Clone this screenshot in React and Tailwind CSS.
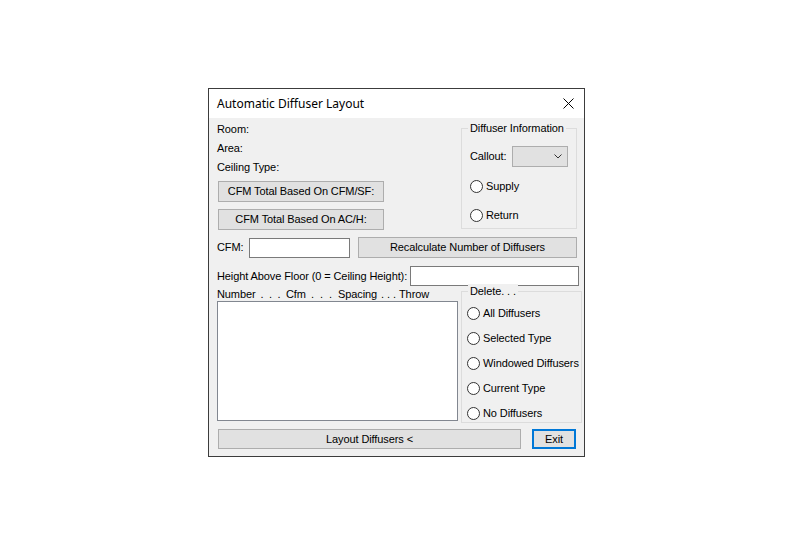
import { useState } from "react";

const font = { fontFamily: '"Liberation Sans", Arial, sans-serif' };

function Radio({ label }) {
  return (
    <div className="flex items-center h-full">
      <span className="w-[13px] h-[13px] rounded-full border border-[#333333] bg-white shrink-0" />
      <span className="ml-[3px] leading-none">{label}</span>
    </div>
  );
}

function WinButton({ children, className = "", border = "border border-[#adadad]" }) {
  return (
    <button
      className={`flex items-center justify-center bg-[#e1e1e1] text-[11px] tracking-[-0.1px] text-black ${border} ${className}`}
    >
      {children}
    </button>
  );
}

function Dots({ className }) {
  return (
    <span className={`flex justify-evenly ${className}`}>
      <span>.</span>
      <span>.</span>
      <span>.</span>
    </span>
  );
}

export default function App() {
  const [cfm] = useState("");

  return (
    <div className="min-h-screen bg-white pt-[88px] pl-[208px]" style={font}>
      <div className="w-[377px] h-[369px] border border-[#3c3c3c] bg-[#f0f0f0] flex flex-col text-[11px] tracking-[-0.1px] text-black">

        {/* Title bar */}
        <div className="h-[29px] bg-white flex items-center justify-between pl-[8px] pr-[10px] tracking-normal">
          <span className="text-[12px]" style={{ fontFamily: '"Noto Sans", "Open Sans", sans-serif' }}>
            Automatic Diffuser Layout
          </span>
          <svg width="11" height="11" viewBox="0 0 11 11">
            <path d="M0.5 0.5 L10.5 10.5 M10.5 0.5 L0.5 10.5" stroke="#000" strokeWidth="1" />
          </svg>
        </div>

        <div className="pl-[8px] flex flex-col">

          {/* Top section */}
          <div className="flex">
            <div className="flex-1 flex flex-col pt-[2px]">
              <div className="h-[19px] flex items-center">Room:</div>
              <div className="h-[19px] flex items-center">Area:</div>
              <div className="h-[19px] flex items-center">Ceiling Type:</div>
              <WinButton className="mt-[4px] ml-[1px] w-[166px] h-[21px]">CFM Total Based On CFM/SF:</WinButton>
              <WinButton className="mt-[7px] ml-[1px] w-[166px] h-[21px]">CFM Total Based On AC/H:</WinButton>
            </div>

            {/* Diffuser Information */}
            <div className="relative mt-[10px] mr-[7px] w-[116px] h-[101px] border border-[#dcdcdc] pt-[17px] pl-[8px]">
              <span className="absolute left-[6px] top-[-8px] bg-[#f0f0f0] px-[2px] leading-[14px]">
                Diffuser Information
              </span>
              <div className="flex items-center">
                <span className="w-[42px]">Callout:</span>
                <div className="w-[56px] h-[21px] bg-[#e1e1e1] border border-[#adadad] flex items-center justify-end pr-[5px]">
                  <svg width="8" height="5" viewBox="0 0 8 5">
                    <path d="M0.5 0.5 L4 4 L7.5 0.5" stroke="#333" strokeWidth="1" fill="none" />
                  </svg>
                </div>
              </div>
              <div className="h-[20px] mt-[9px]">
                <Radio label="Supply" />
              </div>
              <div className="h-[20px] mt-[9px]">
                <Radio label="Return" />
              </div>
            </div>
          </div>

          {/* CFM row */}
          <div className="flex items-center mt-[7px] h-[21px]">
            <span className="w-[32px]">CFM:</span>
            <input
              readOnly
              value={cfm}
              className="w-[101px] h-[20px] bg-white border border-[#7a7a7a] outline-none"
            />
            <WinButton className="ml-[8px] w-[219px] h-[21px]">Recalculate Number of Diffusers</WinButton>
          </div>

          {/* Height row */}
          <div className="flex items-center mt-[8px] h-[20px]">
            <span className="w-[193px] whitespace-nowrap">Height Above Floor (0 = Ceiling Height):</span>
            <input readOnly className="w-[169px] h-[20px] bg-white border border-[#7a7a7a] outline-none" />
          </div>

          {/* Bottom section */}
          <div className="flex mt-[1px]">
            <div className="flex flex-col">
              <div className="h-[14px] leading-[14px] whitespace-nowrap flex">
                <span className="w-[38px]">Number</span>
                <Dots className="w-[31px]" />
                <span className="w-[19px]">Cfm</span>
                <Dots className="w-[33px]" />
                <span className="w-[40px]">Spacing</span>
                <Dots className="w-[21px]" />
                <span>Throw</span>
              </div>
              <div className="w-[241px] h-[120px] bg-white border border-[#828790]" />
            </div>
            <div className="relative ml-[3px] mt-[4px] w-[121px] h-[132px] border border-[#dcdcdc] pt-[9px] pl-[5px]">
              <span className="absolute left-[6px] top-[-8px] bg-[#f0f0f0] px-[2px] leading-[14px]">
                Delete. . .
              </span>
              {["All Diffusers", "Selected Type", "Windowed Diffusers", "Current Type", "No Diffusers"].map((l) => (
                <div key={l} className="h-[25px]">
                  <Radio label={l} />
                </div>
              ))}
            </div>
          </div>

          {/* Footer */}
          <div className="flex mt-[6px]">
            <WinButton className="ml-[1px] w-[303px] h-[20px]">Layout Diffusers &lt;</WinButton>
            <WinButton className="ml-[11px] w-[44px] h-[20px]" border="border-2 border-[#0078d7]">Exit</WinButton>
          </div>
        </div>
      </div>
    </div>
  );
}
